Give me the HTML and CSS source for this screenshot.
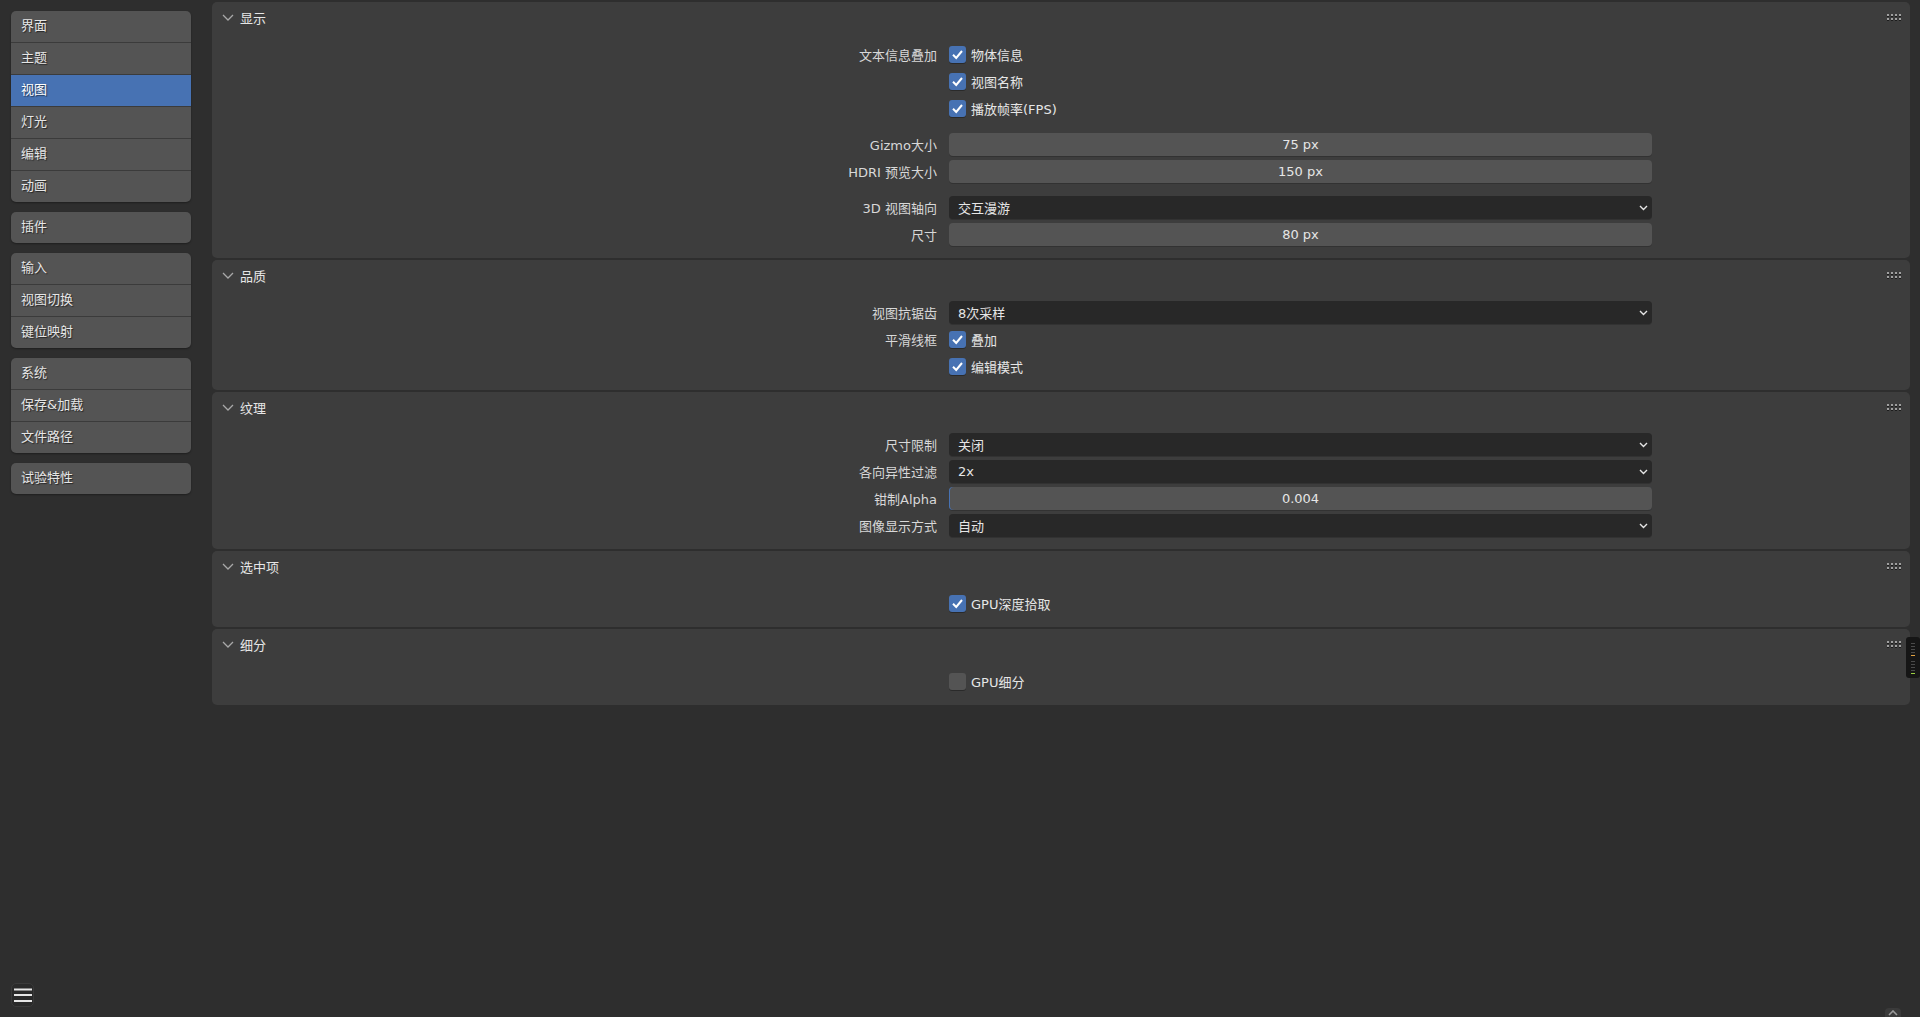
FILE: index.html
```html
<!DOCTYPE html>
<html lang="zh-CN">
<head>
<meta charset="utf-8">
<title>偏好设置 - 视图</title>
<link rel="stylesheet" href="styles.css">
</head>
<body>
<div class="app">
  <nav class="nav">
    <div class="nav-groups">
      <div class="nav-group">
        <div class="nav-item">界面</div>
        <div class="nav-item">主题</div>
        <div class="nav-item active">视图</div>
        <div class="nav-item">灯光</div>
        <div class="nav-item">编辑</div>
        <div class="nav-item">动画</div>
      </div>
      <div class="nav-group">
        <div class="nav-item">插件</div>
      </div>
      <div class="nav-group">
        <div class="nav-item">输入</div>
        <div class="nav-item">视图切换</div>
        <div class="nav-item">键位映射</div>
      </div>
      <div class="nav-group">
        <div class="nav-item">系统</div>
        <div class="nav-item">保存&amp;加载</div>
        <div class="nav-item">文件路径</div>
      </div>
      <div class="nav-group">
        <div class="nav-item">试验特性</div>
      </div>
    </div>
    <div class="menu-btn">
      <svg width="20" height="16" viewBox="0 0 20 16"><rect x="1" y="1.5" width="18" height="2" fill="#e6e6e6"/><rect x="1" y="7" width="18" height="2" fill="#e6e6e6"/><rect x="1" y="13" width="18" height="2" fill="#e6e6e6"/></svg>
    </div>
  </nav>

  <main class="main">
    <section class="panel">
      <header class="panel-head">
        <svg class="chev" width="12" height="7" viewBox="0 0 12 7"><path d="M1 1 L6 6 L11 1" fill="none" stroke="#a8a8a8" stroke-width="1.3"/></svg>
        <span class="panel-title">显示</span>
        <svg class="grip" width="16" height="8" viewBox="0 0 16 8"><g fill="#a0a0a0"><rect x="0" y="0" width="2" height="2"/><rect x="4" y="0" width="2" height="2"/><rect x="8" y="0" width="2" height="2"/><rect x="12" y="0" width="2" height="2"/><rect x="0" y="4" width="2" height="2"/><rect x="4" y="4" width="2" height="2"/><rect x="8" y="4" width="2" height="2"/><rect x="12" y="4" width="2" height="2"/></g><g fill="#1c1c1c"><rect x="0" y="2" width="2" height="1"/><rect x="4" y="2" width="2" height="1"/><rect x="8" y="2" width="2" height="1"/><rect x="12" y="2" width="2" height="1"/><rect x="0" y="6" width="2" height="1"/><rect x="4" y="6" width="2" height="1"/><rect x="8" y="6" width="2" height="1"/><rect x="12" y="6" width="2" height="1"/></g></svg>
      </header>
      <div class="panel-body">
        <div class="group">
          <div class="row"><div class="label">文本信息叠加</div><div class="check"><span class="cb on"><svg width="17" height="17" viewBox="0 0 17 17"><path d="M4 8.8 L7.2 12 L13 5" fill="none" stroke="#fff" stroke-width="2"/></svg></span>物体信息</div></div>
          <div class="row"><div class="label"></div><div class="check"><span class="cb on"><svg width="17" height="17" viewBox="0 0 17 17"><path d="M4 8.8 L7.2 12 L13 5" fill="none" stroke="#fff" stroke-width="2"/></svg></span>视图名称</div></div>
          <div class="row"><div class="label"></div><div class="check"><span class="cb on"><svg width="17" height="17" viewBox="0 0 17 17"><path d="M4 8.8 L7.2 12 L13 5" fill="none" stroke="#fff" stroke-width="2"/></svg></span>播放帧率(FPS)</div></div>
        </div>
        <div class="group">
          <div class="row"><div class="label">Gizmo大小</div><div class="num">75 px</div></div>
          <div class="row"><div class="label">HDRI 预览大小</div><div class="num">150 px</div></div>
        </div>
        <div class="group">
          <div class="row"><div class="label">3D 视图轴向</div><div class="drop"><span>交互漫游</span><svg width="9" height="6" viewBox="0 0 9 6"><path d="M1 1 L4.5 4.5 L8 1" fill="none" stroke="#e6e6e6" stroke-width="1.4"/></svg></div></div>
          <div class="row"><div class="label">尺寸</div><div class="num">80 px</div></div>
        </div>
      </div>
    </section>

    <section class="panel">
      <header class="panel-head">
        <svg class="chev" width="12" height="7" viewBox="0 0 12 7"><path d="M1 1 L6 6 L11 1" fill="none" stroke="#a8a8a8" stroke-width="1.3"/></svg>
        <span class="panel-title">品质</span>
        <svg class="grip" width="16" height="8" viewBox="0 0 16 8"><g fill="#a0a0a0"><rect x="0" y="0" width="2" height="2"/><rect x="4" y="0" width="2" height="2"/><rect x="8" y="0" width="2" height="2"/><rect x="12" y="0" width="2" height="2"/><rect x="0" y="4" width="2" height="2"/><rect x="4" y="4" width="2" height="2"/><rect x="8" y="4" width="2" height="2"/><rect x="12" y="4" width="2" height="2"/></g><g fill="#1c1c1c"><rect x="0" y="2" width="2" height="1"/><rect x="4" y="2" width="2" height="1"/><rect x="8" y="2" width="2" height="1"/><rect x="12" y="2" width="2" height="1"/><rect x="0" y="6" width="2" height="1"/><rect x="4" y="6" width="2" height="1"/><rect x="8" y="6" width="2" height="1"/><rect x="12" y="6" width="2" height="1"/></g></svg>
      </header>
      <div class="panel-body">
        <div class="group">
          <div class="row"><div class="label">视图抗锯齿</div><div class="drop"><span>8次采样</span><svg width="9" height="6" viewBox="0 0 9 6"><path d="M1 1 L4.5 4.5 L8 1" fill="none" stroke="#e6e6e6" stroke-width="1.4"/></svg></div></div>
          <div class="row"><div class="label">平滑线框</div><div class="check"><span class="cb on"><svg width="17" height="17" viewBox="0 0 17 17"><path d="M4 8.8 L7.2 12 L13 5" fill="none" stroke="#fff" stroke-width="2"/></svg></span>叠加</div></div>
          <div class="row"><div class="label"></div><div class="check"><span class="cb on"><svg width="17" height="17" viewBox="0 0 17 17"><path d="M4 8.8 L7.2 12 L13 5" fill="none" stroke="#fff" stroke-width="2"/></svg></span>编辑模式</div></div>
        </div>
      </div>
    </section>

    <section class="panel">
      <header class="panel-head">
        <svg class="chev" width="12" height="7" viewBox="0 0 12 7"><path d="M1 1 L6 6 L11 1" fill="none" stroke="#a8a8a8" stroke-width="1.3"/></svg>
        <span class="panel-title">纹理</span>
        <svg class="grip" width="16" height="8" viewBox="0 0 16 8"><g fill="#a0a0a0"><rect x="0" y="0" width="2" height="2"/><rect x="4" y="0" width="2" height="2"/><rect x="8" y="0" width="2" height="2"/><rect x="12" y="0" width="2" height="2"/><rect x="0" y="4" width="2" height="2"/><rect x="4" y="4" width="2" height="2"/><rect x="8" y="4" width="2" height="2"/><rect x="12" y="4" width="2" height="2"/></g><g fill="#1c1c1c"><rect x="0" y="2" width="2" height="1"/><rect x="4" y="2" width="2" height="1"/><rect x="8" y="2" width="2" height="1"/><rect x="12" y="2" width="2" height="1"/><rect x="0" y="6" width="2" height="1"/><rect x="4" y="6" width="2" height="1"/><rect x="8" y="6" width="2" height="1"/><rect x="12" y="6" width="2" height="1"/></g></svg>
      </header>
      <div class="panel-body">
        <div class="group">
          <div class="row"><div class="label">尺寸限制</div><div class="drop"><span>关闭</span><svg width="9" height="6" viewBox="0 0 9 6"><path d="M1 1 L4.5 4.5 L8 1" fill="none" stroke="#e6e6e6" stroke-width="1.4"/></svg></div></div>
          <div class="row"><div class="label">各向异性过滤</div><div class="drop"><span>2x</span><svg width="9" height="6" viewBox="0 0 9 6"><path d="M1 1 L4.5 4.5 L8 1" fill="none" stroke="#e6e6e6" stroke-width="1.4"/></svg></div></div>
          <div class="row"><div class="label">钳制Alpha</div><div class="num slider">0.004</div></div>
          <div class="row"><div class="label">图像显示方式</div><div class="drop"><span>自动</span><svg width="9" height="6" viewBox="0 0 9 6"><path d="M1 1 L4.5 4.5 L8 1" fill="none" stroke="#e6e6e6" stroke-width="1.4"/></svg></div></div>
        </div>
      </div>
    </section>

    <section class="panel">
      <header class="panel-head">
        <svg class="chev" width="12" height="7" viewBox="0 0 12 7"><path d="M1 1 L6 6 L11 1" fill="none" stroke="#a8a8a8" stroke-width="1.3"/></svg>
        <span class="panel-title">选中项</span>
        <svg class="grip" width="16" height="8" viewBox="0 0 16 8"><g fill="#a0a0a0"><rect x="0" y="0" width="2" height="2"/><rect x="4" y="0" width="2" height="2"/><rect x="8" y="0" width="2" height="2"/><rect x="12" y="0" width="2" height="2"/><rect x="0" y="4" width="2" height="2"/><rect x="4" y="4" width="2" height="2"/><rect x="8" y="4" width="2" height="2"/><rect x="12" y="4" width="2" height="2"/></g><g fill="#1c1c1c"><rect x="0" y="2" width="2" height="1"/><rect x="4" y="2" width="2" height="1"/><rect x="8" y="2" width="2" height="1"/><rect x="12" y="2" width="2" height="1"/><rect x="0" y="6" width="2" height="1"/><rect x="4" y="6" width="2" height="1"/><rect x="8" y="6" width="2" height="1"/><rect x="12" y="6" width="2" height="1"/></g></svg>
      </header>
      <div class="panel-body">
        <div class="group">
          <div class="row"><div class="label"></div><div class="check"><span class="cb on"><svg width="17" height="17" viewBox="0 0 17 17"><path d="M4 8.8 L7.2 12 L13 5" fill="none" stroke="#fff" stroke-width="2"/></svg></span>GPU深度拾取</div></div>
        </div>
      </div>
    </section>

    <section class="panel">
      <header class="panel-head">
        <svg class="chev" width="12" height="7" viewBox="0 0 12 7"><path d="M1 1 L6 6 L11 1" fill="none" stroke="#a8a8a8" stroke-width="1.3"/></svg>
        <span class="panel-title">细分</span>
        <svg class="grip" width="16" height="8" viewBox="0 0 16 8"><g fill="#a0a0a0"><rect x="0" y="0" width="2" height="2"/><rect x="4" y="0" width="2" height="2"/><rect x="8" y="0" width="2" height="2"/><rect x="12" y="0" width="2" height="2"/><rect x="0" y="4" width="2" height="2"/><rect x="4" y="4" width="2" height="2"/><rect x="8" y="4" width="2" height="2"/><rect x="12" y="4" width="2" height="2"/></g><g fill="#1c1c1c"><rect x="0" y="2" width="2" height="1"/><rect x="4" y="2" width="2" height="1"/><rect x="8" y="2" width="2" height="1"/><rect x="12" y="2" width="2" height="1"/><rect x="0" y="6" width="2" height="1"/><rect x="4" y="6" width="2" height="1"/><rect x="8" y="6" width="2" height="1"/><rect x="12" y="6" width="2" height="1"/></g></svg>
      </header>
      <div class="panel-body">
        <div class="group">
          <div class="row"><div class="label"></div><div class="check"><span class="cb"></span>GPU细分</div></div>
        </div>
      </div>
    </section>
  </main>

  <div class="side-widget">
    <svg width="14" height="41" viewBox="0 0 14 41"><rect x="0" y="0" width="14" height="41" rx="3" fill="#161616"/><g fill="#4a4a4a"><rect x="5" y="6" width="4" height="1"/><rect x="5" y="9" width="4" height="1"/><rect x="5" y="12" width="4" height="1"/><rect x="5" y="15" width="4" height="1"/><rect x="5" y="24" width="4" height="1"/><rect x="5" y="27" width="4" height="1"/><rect x="5" y="30" width="4" height="1"/><rect x="5" y="33" width="4" height="1"/></g><rect x="5" y="18" width="4" height="1" fill="#e0a040"/><rect x="5" y="36" width="4" height="1" fill="#9ad040"/></svg>
  </div>
  <div class="corner-tab">
    <svg width="10" height="6" viewBox="0 0 10 6"><path d="M1 5 L5 1 L9 5" fill="none" stroke="#9a9a9a" stroke-width="1.6"/></svg>
  </div>
</div>
</body>
</html>
```

FILE: styles.css
```css
* {
  box-sizing: border-box;
  margin: 0;
  padding: 0;
}

html, body {
  width: 1920px;
  height: 1017px;
  overflow: hidden;
  background: #2e2e2e;
}

body {
  font-family: "DejaVu Sans", "Noto Sans CJK SC", sans-serif;
  font-size: 13px;
  color: #e6e6e6;
}

.app {
  position: relative;
  display: flex;
  height: 1017px;
}

/* navigation */
.nav {
  width: 202px;
  flex: none;
  padding: 11px 11px 10px 11px;
  display: flex;
  flex-direction: column;
}

.nav-groups {
  display: flex;
  flex-direction: column;
  gap: 10px;
}

.nav-group {
  border-radius: 5px;
  overflow: hidden;
  background: #545454;
  box-shadow: 0 1px 2px rgba(0, 0, 0, 0.35);
}

.nav-item {
  height: 31px;
  line-height: 29px;
  padding-left: 10px;
  color: #e6e6e6;
  text-shadow: 1px 1px 1px rgba(0, 0, 0, 0.55);
}

.nav-item + .nav-item {
  height: 32px;
  border-top: 1px solid #3b3b3b;
}

.nav-item.active {
  background: #4772b3;
  color: #ffffff;
}

.menu-btn {
  margin-top: auto;
  width: 23px;
  height: 24px;
  border-radius: 5px;
  border: 1px solid #3a3a3a;
  background: #2a2a2a;
  display: flex;
  align-items: center;
  justify-content: center;
}

/* main region */
.main {
  flex: 1;
  padding: 2px 10px 0 10px;
  display: flex;
  flex-direction: column;
  gap: 2px;
}

.panel {
  background: #3d3d3d;
  border-radius: 5px;
}

.panel-head {
  height: 30px;
  display: flex;
  align-items: center;
  padding-left: 10px;
  padding-right: 7px;
}

.chev {
  flex: none;
  margin-top: 1px;
}

.panel-title {
  margin-left: 6px;
  color: #e6e6e6;
}

.grip {
  margin-left: auto;
  margin-top: 1px;
}

.panel-body {
  padding: 9px 0 10px 0;
  display: flex;
  flex-direction: column;
  gap: 9px;
}

.row {
  height: 27px;
  display: grid;
  grid-template-columns: 725px 703px;
  column-gap: 12px;
  align-items: center;
}

.label {
  text-align: right;
  color: #d8d8d8;
  white-space: nowrap;
}

.num {
  height: 23px;
  line-height: 23px;
  border-radius: 4px;
  background: #545454;
  text-align: center;
  color: #e6e6e6;
  box-shadow: 0 1px 0 rgba(0, 0, 0, 0.18);
}

.num.slider {
  box-shadow: inset 1px 0 0 #4772b3, 0 1px 0 rgba(0, 0, 0, 0.18);
}

.drop {
  height: 23px;
  border-radius: 4px;
  background: #282828;
  display: flex;
  align-items: center;
  justify-content: space-between;
  padding: 0 4px 0 9px;
  color: #e6e6e6;
  box-shadow: 0 1px 0 rgba(0, 0, 0, 0.18);
}

.check {
  display: flex;
  align-items: center;
  gap: 5px;
  color: #e6e6e6;
  white-space: nowrap;
}

.cb {
  width: 17px;
  height: 17px;
  border-radius: 3px;
  background: #545454;
  display: flex;
  box-shadow: 0 1px 0 rgba(0, 0, 0, 0.3);
}

.cb.on {
  background: #4772b3;
}

/* overlays on the right edge */
.side-widget {
  position: absolute;
  left: 1906px;
  top: 637px;
  width: 14px;
  height: 41px;
}

.corner-tab {
  position: absolute;
  left: 1885px;
  top: 1008px;
  width: 16px;
  height: 9px;
  border-radius: 4px 4px 0 0;
  background: #3a3a3a;
  display: flex;
  justify-content: center;
  align-items: center;
}
```
